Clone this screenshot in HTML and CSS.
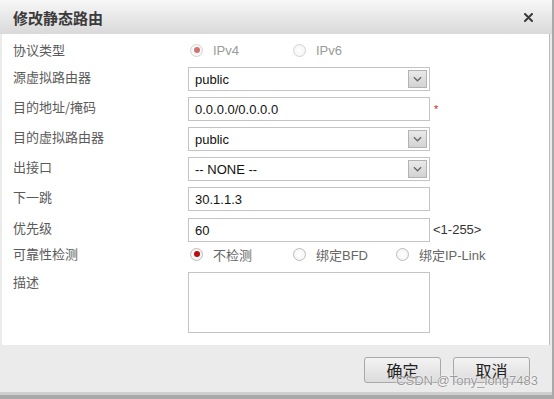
FILE: index.html
```html
<!DOCTYPE html>
<html lang="zh-CN">
<head>
    <meta charset="UTF-8">
    <meta name="viewport" content="width=device-width, initial-scale=1.0">
    <title>修改静态路由</title>
    <link rel="stylesheet" href="styles.css">
</head>
<body>
    <div class="dialog">
        <div class="titlebar">
            <span class="title">修改静态路由</span>
            <svg class="close" viewBox="0 0 9 9" xmlns="http://www.w3.org/2000/svg">
                <path d="M1 1L8 8M8 1L1 8" stroke="#3a3a3a" stroke-width="2" stroke-linecap="round"/>
            </svg>
        </div>

        <div class="content">
            <div class="form">
                <div class="row row-radio-top">
                    <span class="label">协议类型</span>
                    <div class="radios disabled">
                        <span class="radio"><span class="dot checked"></span>IPv4</span>
                        <span class="radio"><span class="dot"></span>IPv6</span>
                    </div>
                </div>

                <div class="row">
                    <span class="label">源虚拟路由器</span>
                    <div class="field select">
                        <span>public</span>
                        <span class="arrow"><svg viewBox="0 0 10 6"><path d="M1 1L5 5L9 1" fill="none" stroke="#666" stroke-width="1.4"/></svg></span>
                    </div>
                </div>

                <div class="row">
                    <span class="label">目的地址/掩码</span>
                    <input class="field" type="text" value="0.0.0.0/0.0.0.0">
                    <span class="required">*</span>
                </div>

                <div class="row">
                    <span class="label">目的虚拟路由器</span>
                    <div class="field select">
                        <span>public</span>
                        <span class="arrow"><svg viewBox="0 0 10 6"><path d="M1 1L5 5L9 1" fill="none" stroke="#666" stroke-width="1.4"/></svg></span>
                    </div>
                </div>

                <div class="row">
                    <span class="label">出接口</span>
                    <div class="field select">
                        <span>-- NONE --</span>
                        <span class="arrow"><svg viewBox="0 0 10 6"><path d="M1 1L5 5L9 1" fill="none" stroke="#666" stroke-width="1.4"/></svg></span>
                    </div>
                </div>

                <div class="row">
                    <span class="label">下一跳</span>
                    <input class="field" type="text" value="30.1.1.3">
                </div>

                <div class="row row-priority">
                    <span class="label">优先级</span>
                    <input class="field" type="text" value="60">
                    <span class="suffix">&lt;1-255&gt;</span>
                </div>

                <div class="row row-radio">
                    <span class="label">可靠性检测</span>
                    <div class="radios">
                        <span class="radio"><span class="dot checked"></span>不检测</span>
                        <span class="radio"><span class="dot"></span>绑定BFD</span>
                        <span class="radio"><span class="dot"></span>绑定IP-Link</span>
                    </div>
                </div>

                <div class="row row-desc">
                    <span class="label">描述</span>
                    <textarea class="field memo"></textarea>
                </div>
            </div>
        </div>

        <div class="footer">
            <button type="button">确定</button>
            <button type="button">取消</button>
        </div>

        <span class="watermark">CSDN @Tony_long7483</span>
    </div>
</body>
</html>
```

FILE: styles.css
```css
body {
    margin: 0;
    font-family: "Liberation Sans", "Noto Sans CJK SC", sans-serif;
    background: #fff;
}
.dialog {
    position: relative;
    width: 554px;
    height: 399px;
    box-sizing: border-box;
    display: flex;
    flex-direction: column;
    background: #ebebeb;
    border-right: 2px solid #a9a9a9;
    border-bottom: 4px solid #a9a9a9;
}
.titlebar {
    height: 34px;
    flex: none;
    display: flex;
    align-items: center;
    justify-content: space-between;
    padding: 0 19px 0 13px;
    background: linear-gradient(#f7f7f7, #d9d9d9);
}
.title {
    font-family: "Noto Sans CJK SC", sans-serif;
    font-size: 15px;
    font-weight: bold;
    color: #3a3a3a;
}
.close {
    width: 9px;
    height: 9px;
    margin-top: 1px;
}
.content {
    flex: 1;
    background: #fff;
    margin: 0 2px;
    border-right: 1px solid #bdbdbd;
    padding: 5px 0 0 11px;
}
.form {
    display: flex;
    flex-direction: column;
    gap: 6px;
}
.row {
    display: flex;
    align-items: flex-start;
}
.row-radio-top {
    height: 22px;
    align-items: center;
}
.row-priority {
    margin-top: 1px;
}
.row-radio {
    height: 16px;
    margin-top: -2px;
    align-items: center;
}
.row-desc {
    margin-top: 4px;
}
.label {
    width: 175px;
    flex: none;
    font-family: "Noto Sans CJK SC", sans-serif;
    font-size: 13px;
    line-height: 20px;
    color: #5a5a5a;
}
.field {
    width: 242px;
    height: 24px;
    box-sizing: border-box;
    margin: 0;
    border: 1px solid #c4c4c4;
    padding: 0 6px;
    font-family: "Liberation Sans", sans-serif;
    font-size: 13px;
    color: #111;
    background: #fff;
    outline: none;
}
.select {
    display: flex;
    align-items: center;
    justify-content: space-between;
    padding: 0 2px 0 6px;
}
.arrow {
    width: 19px;
    height: 18px;
    box-sizing: border-box;
    border: 1px solid #b3b3b3;
    background: linear-gradient(#e9e9e9, #d3d3d3);
    display: flex;
    align-items: center;
    justify-content: center;
}
.arrow svg {
    width: 9px;
    height: 6px;
}
.memo {
    height: 61px;
    resize: none;
}
.required {
    color: #e02020;
    font-size: 11px;
    line-height: 14px;
    margin: 5px 0 0 4px;
}
.suffix {
    margin-left: 3px;
    font-size: 13px;
    line-height: 24px;
    color: #333;
}
.radios {
    display: flex;
    align-items: center;
    margin-left: 2px;
}
.radio {
    width: 103px;
    display: flex;
    align-items: center;
    gap: 10px;
    font-size: 13px;
    color: #666;
}
.dot {
    width: 13px;
    height: 13px;
    box-sizing: border-box;
    border: 1px solid #bcbcbc;
    border-radius: 50%;
    background: radial-gradient(#fff, #f1f1f1);
    display: flex;
    align-items: center;
    justify-content: center;
}
.dot.checked::after {
    content: "";
    width: 6px;
    height: 6px;
    border-radius: 50%;
    background: #b80f0f;
}
.disabled .radio {
    color: #9a9a9a;
}
.disabled .dot {
    border-color: #d4d4d4;
}
.disabled .dot.checked::after {
    background: #d27373;
}
.footer {
    height: 35px;
    flex: none;
    display: flex;
    justify-content: flex-end;
    align-items: flex-start;
    gap: 12px;
    padding: 12px 22px 0 0;
    box-sizing: content-box;
    border-bottom: 3px solid #cfcfcf;
}
button {
    width: 77px;
    height: 26px;
    border: 1px solid #a8a8a8;
    border-radius: 3px;
    background: linear-gradient(#f3f3f3, #dcdcdc);
    font-family: "Noto Sans CJK SC", sans-serif;
    font-size: 16px;
    line-height: 1;
    color: #222;
    padding: 0;
}
.watermark {
    position: absolute;
    right: 14px;
    top: 373px;
    font-size: 13px;
    color: rgba(125, 125, 125, 0.8);
    text-shadow: 0 0 2px #fff, 0 0 1px #fff;
}
```
